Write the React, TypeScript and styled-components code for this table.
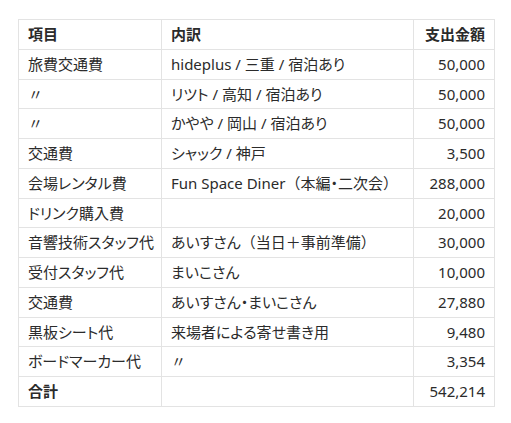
import React from "react";
import styled, { createGlobalStyle } from "styled-components";

const GlobalStyle = createGlobalStyle`
  html, body {
    margin: 0;
    padding: 0;
    background: #ffffff;
  }
  body {
    font-family: "Noto Sans", "Noto Sans CJK JP", sans-serif;
    color: #2b2b2b;
    font-feature-settings: "palt";
  }
`;

const Page = styled.div`
  padding: 19px 0 0 18px;
`;

const Table = styled.table`
  border-collapse: collapse;
  table-layout: fixed;
  width: 476px;
  font-size: 15px;
`;

const HeadCell = styled.th<{ $align?: "left" | "right" }>`
  border: 1px solid #e3e3e3;
  padding: 4px 9px;
  line-height: 20.75px;
  font-weight: 700;
  text-align: ${(p) => p.$align ?? "left"};
  white-space: nowrap;
`;

const Cell = styled.td<{ $align?: "left" | "right"; $bold?: boolean }>`
  border: 1px solid #e3e3e3;
  padding: 4px 9px;
  line-height: 20.75px;
  font-weight: ${(p) => (p.$bold ? 700 : 400)};
  text-align: ${(p) => p.$align ?? "left"};
  white-space: nowrap;
  overflow: hidden;
`;

// full-width punctuation keeps its em box like in the original
const Wide = styled.span`
  font-feature-settings: normal;
`;

const withWide = (text: string) =>
  text.split(/([（）＋])/).map((part, i) =>
    /^[（）＋]$/.test(part) ? <Wide key={i}>{part}</Wide> : part
  );

type Row = { item: string; detail: string; amount: string };

const rows: Row[] = [
  { item: "旅費交通費", detail: "hideplus / 三重 / 宿泊あり", amount: "50,000" },
  { item: "〃", detail: "リツト / 高知 / 宿泊あり", amount: "50,000" },
  { item: "〃", detail: "かやや / 岡山 / 宿泊あり", amount: "50,000" },
  { item: "交通費", detail: "シャック / 神戸", amount: "3,500" },
  { item: "会場レンタル費", detail: "Fun Space Diner（本編・二次会）", amount: "288,000" },
  { item: "ドリンク購入費", detail: "", amount: "20,000" },
  { item: "音響技術スタッフ代", detail: "あいすさん（当日＋事前準備）", amount: "30,000" },
  { item: "受付スタッフ代", detail: "まいこさん", amount: "10,000" },
  { item: "交通費", detail: "あいすさん・まいこさん", amount: "27,880" },
  { item: "黒板シート代", detail: "来場者による寄せ書き用", amount: "9,480" },
  { item: "ボードマーカー代", detail: "〃", amount: "3,354" },
];

export default function App() {
  return (
    <>
      <GlobalStyle />
      <Page>
        <Table>
          <colgroup>
            <col style={{ width: 143 }} />
            <col style={{ width: 252 }} />
            <col style={{ width: 81 }} />
          </colgroup>
          <thead>
            <tr>
              <HeadCell>項目</HeadCell>
              <HeadCell>内訳</HeadCell>
              <HeadCell $align="right">支出金額</HeadCell>
            </tr>
          </thead>
          <tbody>
            {rows.map((r, i) => (
              <tr key={i}>
                <Cell>{r.item}</Cell>
                <Cell>{withWide(r.detail)}</Cell>
                <Cell $align="right">{r.amount}</Cell>
              </tr>
            ))}
            <tr>
              <Cell $bold>合計</Cell>
              <Cell />
              <Cell $align="right">542,214</Cell>
            </tr>
          </tbody>
        </Table>
      </Page>
    </>
  );
}
